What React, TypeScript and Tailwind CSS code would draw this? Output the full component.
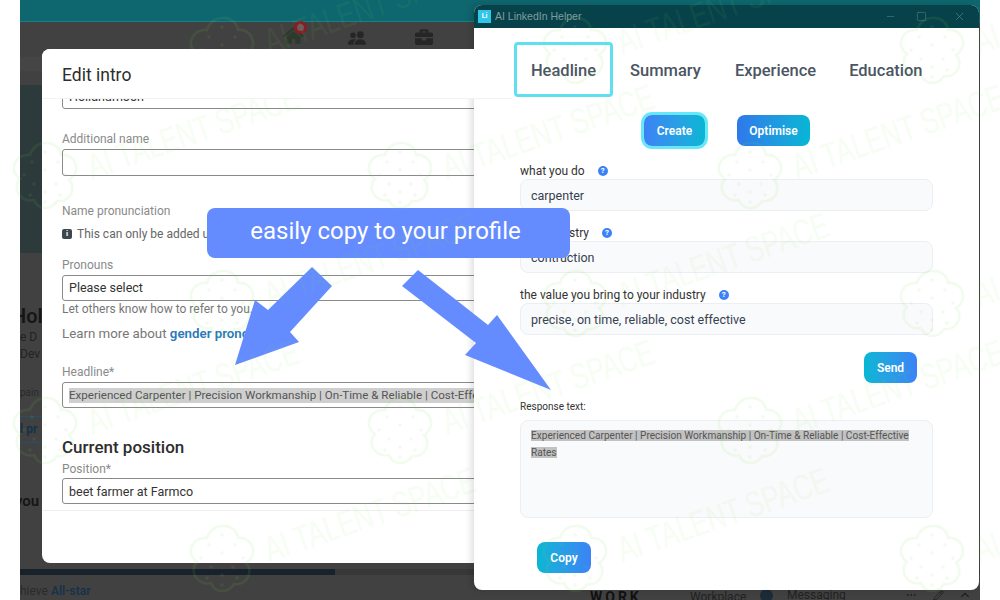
import React from "react";
import { FaHome, FaBriefcase } from "react-icons/fa";
import { BsPeopleFill } from "react-icons/bs";
import { Minus, Square, X, Pencil, ChevronUp, MoreHorizontal } from "lucide-react";

const LOGOS: [number, number][] = [
  [222, 50], [575, 50], [932, 50],
  [45, 175], [400, 175], [750, 175],
  [222, 303], [575, 303], [932, 303],
  [45, 430], [400, 430], [750, 430],
  [222, 558], [575, 558], [932, 558],
];

function Clover() {
  const dots: [number, number][] = [
    [35, 12], [22, 22], [48, 22], [14, 35], [35, 30], [56, 35], [24, 44], [46, 44], [35, 52], [35, 62], [20, 55], [50, 55],
  ];
  return (
    <svg width="70" height="70" viewBox="0 0 70 70" fill="none" stroke="#79e34f" strokeWidth="2.6">
      <path d="M35 3c8-1 15 4 16 12 9-1 16 6 15 15-1 5-4 8-7 10 3 3 4 7 3 11-2 8-9 11-15 10-3 5-7 7-12 7s-9-3-11-8c-8 2-15-3-17-10-1-5 0-8 3-11-4-3-7-8-6-13 2-8 9-12 16-11 2-7 8-12 15-12z" />
      {dots.map(([x, y], i) => (
        <circle key={i} cx={x} cy={y} r="1.8" fill="#79e34f" stroke="none" />
      ))}
    </svg>
  );
}

function Watermark() {
  return (
    <div className="absolute inset-0 overflow-hidden pointer-events-none opacity-[0.09]">
      {LOGOS.map(([x, y], i) => (
        <React.Fragment key={i}>
          <div className="absolute" style={{ left: x - 35, top: y - 35 }}>
            <Clover />
          </div>
          <div
            className="absolute w-[320px] text-center text-[36px] leading-[40px] text-[#79e34f] opacity-70 font-['Liberation_Sans',sans-serif] whitespace-nowrap"
            style={{ left: x + 148 - 160, top: y - 43 - 20, transform: "rotate(-19deg) scaleX(0.72)" }}
          >
            AI TALENT SPACE
          </div>
        </React.Fragment>
      ))}
    </div>
  );
}

function Field({ children, className = "" }: { children?: React.ReactNode; className?: string }) {
  return (
    <div className={`ml-5 w-[450px] box-border border border-[#8a8a8a] rounded-[3px] pl-[6px] flex items-center text-[#333] whitespace-nowrap overflow-hidden ${className}`}>
      {children}
    </div>
  );
}

function Label({ children, className = "" }: { children: React.ReactNode; className?: string }) {
  return <div className={`ml-5 text-[12px] leading-[16px] text-[#8a8a8a] whitespace-nowrap ${className}`}>{children}</div>;
}

function EditIntro() {
  return (
    <div className="absolute left-[22px] top-[49px] w-[470px] h-[514px] bg-white rounded-lg overflow-hidden flex flex-col">
      <div className="h-[50px] shrink-0 flex items-center pl-5 pt-[3px] text-[17.5px] text-[#2d2d2d] border-b border-[#f2f2f2] bg-white z-10">Edit intro</div>
      <div className="flex flex-col">
        <Field className="h-[26px] -mt-[16px] items-end leading-[14px] text-[12.5px]">
          <span className="-mb-[3px] pb-[7px]">Hollandmoon</span>
        </Field>
        <Label className="mt-[22px]">Additional name</Label>
        <Field className="h-[27px] mt-[2px]" />
        <Label className="mt-[27px]">Name pronunciation</Label>
        <div className="ml-5 mt-[7px] h-4 flex items-center gap-[5px] text-[12px] text-[#666] whitespace-nowrap">
          <span className="w-[10px] h-[10px] rounded-[2px] bg-[#3d4750] text-white text-[8px] leading-[10px] font-bold text-center">i</span>
          This can only be added using our mobile app
        </div>
        <Label className="mt-[15px]">Pronouns</Label>
        <Field className="h-[26px] mt-[2px] text-[12.5px]">Please select</Field>
        <div className="ml-5 text-[12px] leading-[16px] text-[#777] whitespace-nowrap">Let others know how to refer to you.</div>
        <div className="ml-5 mt-[8px] text-[13.3px] leading-[18px] text-[#777] whitespace-nowrap">
          Learn more about <span className="font-semibold text-[#2a7ab8]">gender pronouns</span>
        </div>
        <Label className="mt-[21px]">Headline*</Label>
        <Field className="h-[26px] mt-[2px] text-[11.6px]">
          <span className="bg-[#cfcfcf] leading-[15px] text-[#555]">Experienced Carpenter | Precision Workmanship | On-Time &amp; Reliable | Cost-Effective Rates</span>
        </Field>
        <div className="ml-5 mt-[27px] text-[17px] leading-[24px] font-medium text-[#2d2d2d]">Current position</div>
        <Label className="mt-[2px]">Position*</Label>
        <Field className="h-[26px] mt-[1px] pt-[2px] text-[12.5px]">beet farmer at Farmco</Field>
        <div className="mt-[6px] border-b border-[#eeeeee]" />
      </div>
    </div>
  );
}

function GradientButton({ children, className = "" }: { children: React.ReactNode; className?: string }) {
  return (
    <div className={`flex items-center justify-center rounded-lg text-white text-[12px] font-semibold h-[31px] ${className}`}>{children}</div>
  );
}

function Help() {
  return (
    <span className="w-[10px] h-[10px] rounded-full bg-[#3b82f6] text-white text-[8px] leading-[10px] font-bold text-center">?</span>
  );
}

function FormRow({ label, value, className = "" }: { label: string; value: string; className?: string }) {
  return (
    <div className={className}>
      <div className="h-[16px] pt-[1px] flex items-center text-[12px] text-[#333] whitespace-nowrap">
        {label}
        <span className="flex ml-[13px]"><Help /></span>
      </div>
      <div className="mt-[1px] h-[32px] box-border border border-[#eceff2] bg-[#f9fafb] rounded-lg pl-[10px] pt-[2px] flex items-center text-[12.5px] text-[#374151]">{value}</div>
    </div>
  );
}

function HelperWindow() {
  const tab = "text-[16.5px] font-medium text-[#4b5563] whitespace-nowrap pt-[4px]";
  return (
    <div className="absolute left-[454px] top-[5px] w-[505px] h-[585px] bg-white rounded-lg overflow-hidden flex flex-col shadow-[-3px_0_6px_rgba(0,0,0,0.12)]">
      <div className="h-[23px] shrink-0 bg-[#07424a] flex items-center pl-[4px] text-[#8ea6aa]">
        <span className="w-[13px] h-[13px] bg-[#2fc6e8] text-white text-[7px] leading-[13px] font-bold text-center">Li</span>
        <span className="ml-[4px] text-[10.5px] font-['Liberation_Sans',sans-serif] text-[#7f9da1]">AI LinkedIn Helper</span>
        <div className="ml-auto flex items-center pr-[13px] text-[#6f8f93]">
          <Minus size={11} strokeWidth={1} />
          <Square size={11} strokeWidth={1} className="ml-[20px]" />
          <X size={13} strokeWidth={1} className="ml-[26px]" />
        </div>
      </div>
      <div className="flex items-center h-[55px] mt-[14px] pl-[40px]">
        <div className={`${tab} w-[99px] h-[55px] box-border border-[3px] border-[#5fe0f0] rounded flex items-center justify-center`}>Headline</div>
        <div className={`${tab} ml-[17px]`}>Summary</div>
        <div className={`${tab} ml-[34px]`}>Experience</div>
        <div className={`${tab} ml-[33px]`}>Education</div>
      </div>
      <div className="flex items-center mt-[18px] pl-[170px]">
        <GradientButton className="w-[61px] bg-gradient-to-r from-[#3b82f6] to-[#06b6d4] ring-[3px] ring-[#67e8f9]">Create</GradientButton>
        <GradientButton className="ml-[32px] w-[73px] bg-gradient-to-r from-[#2f78ea] to-[#06b6d4]">Optimise</GradientButton>
      </div>
      <div className="mx-[46px] mt-[16px] flex flex-col gap-[13px]">
        <FormRow label="what you do" value="carpenter" />
        <FormRow label="your industry" value="contruction" />
        <FormRow label="the value you bring to your industry" value="precise, on time, reliable, cost effective" />
      </div>
      <div className="flex justify-end mt-[17px] pr-[62px]">
        <GradientButton className="w-[53px] bg-gradient-to-r from-[#06b6d4] to-[#3b82f6]">Send</GradientButton>
      </div>
      <div className="ml-[46px] mt-[17px] text-[10px] leading-[14px] text-[#333]">Response text:</div>
      <div className="mx-[46px] mt-[6px] h-[98px] box-border border border-[#eceff2] bg-[#f9fafb] rounded-lg px-[10px] pt-[6px] text-[10.1px] leading-[17px] text-[#555]">
        <span className="bg-[#c2c2c2]">Experienced Carpenter | Precision Workmanship | On-Time &amp; Reliable | Cost-Effective Rates</span>
      </div>
      <div className="ml-[63px] mt-[24px]">
        <GradientButton className="w-[54px] bg-gradient-to-r from-[#06b6d4] to-[#3b82f6]">Copy</GradientButton>
      </div>
    </div>
  );
}

function Backdrop() {
  const clip = "w-[22px] overflow-hidden whitespace-nowrap";
  return (
    <div className="absolute inset-0 flex flex-col bg-[#414141] overflow-hidden">
      <div className="h-[22px] shrink-0 bg-[#0e666e] border-b border-[#1a7f85]" />
      <div className="h-[27px] shrink-0 flex items-center text-[#262626] relative">
        <div className="absolute left-[263px] top-[3px]">
          <FaHome size={21} color="#2c3a2c" />
          <span className="absolute -top-[4px] left-[11px] w-[13px] h-[13px] rounded-full border-[3px] border-[#8a1c22] bg-[#6a5a5a]" />
        </div>
        <div className="absolute left-[328px] top-[7px]"><BsPeopleFill size={18} /></div>
        <div className="absolute left-[395px] top-[6px]"><FaBriefcase size={18} /></div>
      </div>
      <div className="w-[22px] h-[14px] mt-[8px] bg-[#454545]" />
      <div className="w-[22px] h-[168px] mt-[14px] bg-[#2d3a3c]" />
      <div className={`${clip} mt-[52px] text-[20px] leading-[22px] font-semibold text-[#151515] indent-[-8px]`}>Hol</div>
      <div className={`${clip} mt-[2px] text-[12px] leading-[16px] text-[#222]`}>e D</div>
      <div className={`${clip} mt-[1px] text-[12px] leading-[16px] text-[#222]`}>Dev</div>
      <div className={`${clip} mt-[24px] text-[10px] leading-[14px] text-[#2a2a2a]`}>pain</div>
      <div className={`${clip} mt-[16px] h-[27px] box-border border-y border-[#25506b] text-[12px] leading-[25px] font-bold text-[#16324a]`}>l pr</div>
      <div className={`${clip} mt-[48px] text-[15px] leading-[20px] font-semibold text-[#151515] indent-[-5px]`}>you</div>
      <div className="flex h-[6px] mt-[58px] bg-[#383838]">
        <div className="w-[315px] bg-[#18222a]" />
      </div>
      <div className="mt-[8px] text-[12px] leading-[16px] text-[#2a2a2a] whitespace-nowrap">hieve <span className="font-semibold text-[#16324a]">All-star</span></div>
      <div className="absolute left-[570px] top-[590px] text-[14px] leading-[14px] font-bold tracking-[3px] text-[#111]">WORK</div>
      <div className="absolute left-[670px] top-[590px] text-[12px] leading-[14px] text-[#222]">Workplace</div>
      <div className="absolute left-[740px] right-0 top-[590px] h-[10px] flex items-center text-[12px] text-[#222]">
        <span className="w-[13px] h-[13px] rounded-full bg-[#1c2b38]" />
        <span className="ml-[14px]">Messaging</span>
        <MoreHorizontal size={12} className="absolute left-[145px]" />
        <Pencil size={11} className="absolute left-[173px]" />
        <ChevronUp size={14} className="absolute left-[198px]" />
      </div>
    </div>
  );
}

function Arrows() {
  return (
    <svg className="absolute inset-0 pointer-events-none" width="1000" height="600" viewBox="0 0 1000 600">
      <polygon fill="#648cff" points="312,267 332,286 290,332 299,342 235,365 255,300 268,310" />
      <polygon fill="#648cff" points="418,270 488,325 497,315 551,390 465,355 476,343 402,286" />
    </svg>
  );
}

export default function App() {
  return (
    <div className="relative w-[1000px] h-[600px] bg-white overflow-hidden font-['Roboto',sans-serif]">
      <div className="absolute left-[20px] top-0 w-[960px] h-[600px] overflow-hidden">
        <Backdrop />
        <EditIntro />
        <HelperWindow />
      </div>
      <Arrows />
      <div className="absolute left-[207px] top-[208px] w-[363px] h-[50px] rounded-lg bg-[#648cff] flex items-center justify-center pb-[4px] pr-[6px] text-[24px] text-white whitespace-nowrap">
        easily copy to your profile
      </div>
      <Watermark />
    </div>
  );
}
